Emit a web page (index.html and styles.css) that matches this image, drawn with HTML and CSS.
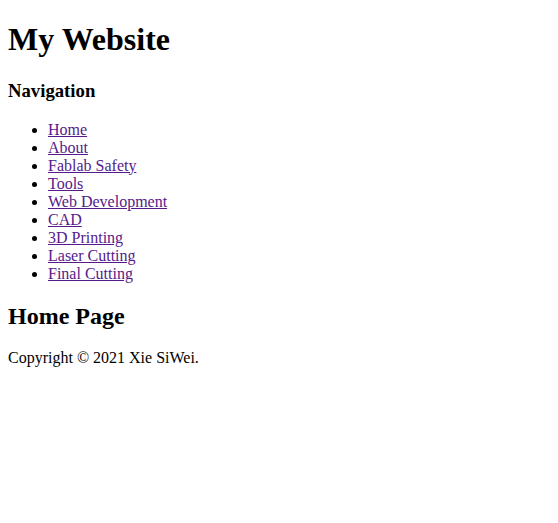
FILE: index.html
```html
<!DOCTYPE html>
<html>
<head>
<meta charset="utf-8">
<title>My Website</title>
<link rel="stylesheet" href="styles.css">
</head>
<body>
<h1 class="site-title">My Website</h1>
<h3 class="nav-title">Navigation</h3>
<ul class="nav-list">
<li><a class="nav-link" href="#">Home</a></li>
<li><a class="nav-link" href="#">About</a></li>
<li><a class="nav-link" href="#">Fablab Safety</a></li>
<li><a class="nav-link" href="#">Tools</a></li>
<li><a class="nav-link" href="#">Web Development</a></li>
<li><a class="nav-link" href="#">CAD</a></li>
<li><a class="nav-link" href="#">3D Printing</a></li>
<li><a class="nav-link" href="#">Laser Cutting</a></li>
<li><a class="nav-link" href="#">Final Cutting</a></li>
</ul>
<h2 class="page-title">Home Page</h2>
<p class="copyright">Copyright © 2021 Xie SiWei.</p>
</body>
</html>
```
FILE: styles.css
```css
body {
  margin: 8px;
  font-family: "Liberation Serif", "Times New Roman", serif;
  font-size: 16px;
  color: #000;
  background: #fff;
}
.site-title {
  margin-top: 13.44px;
}
.nav-link {
  color: #551a8b;
  text-decoration: underline;
}
```
